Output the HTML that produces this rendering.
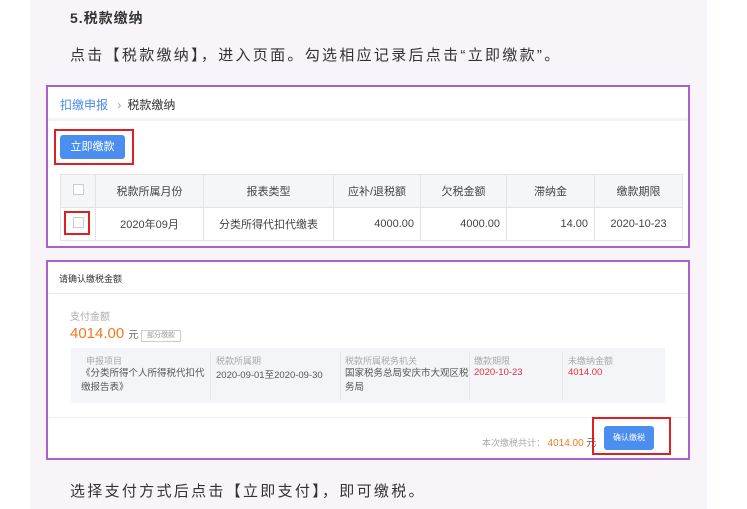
<!DOCTYPE html>
<html><head><meta charset="utf-8"><style>
*{margin:0;padding:0;box-sizing:border-box}
body{width:747px;height:509px;background:#fff;position:relative;overflow:hidden;font-family:"Liberation Sans","Noto Sans CJK SC",sans-serif;}
.bg{position:absolute;left:30px;top:0;width:677px;height:509px;background:#f9f4fa}
.a{position:absolute;white-space:nowrap}
.box{position:absolute;border:2px solid #a663cc;background:#fff}
.g{color:#aaa}
td{border:1px solid #e3e3e3;font-size:11px;color:#444;text-align:center;height:33px}
</style></head><body>
<div class="bg"></div>
<div class="a" style="left:70px;top:8px;font-size:14px;font-weight:bold;color:#333;letter-spacing:1px">5.税款缴纳</div>
<div class="a" style="left:70px;top:44px;font-size:15px;color:#333;letter-spacing:2.3px">点击【税款缴纳】，进入页面。勾选相应记录后点击“立即缴款”。</div>

<div class="box" style="left:46px;top:85px;width:644px;height:163px">
 <div class="a" style="left:12px;top:9px;font-size:12px;color:#4a8ae8">扣缴申报 <span style="color:#999;margin:0 6px">›</span><span style="color:#333">税款缴纳</span></div>
 <div class="a" style="left:0;top:31px;width:640px;height:3px;background:#f2f3f5"></div>
 <div class="a" style="left:6px;top:42px;width:80px;height:36px;border:2px solid #e02020"></div>
 <div class="a" style="left:12px;top:48px;width:65px;height:24px;background:#4a8ef0;border-radius:3px;color:#fff;font-size:11px;text-align:center;line-height:24px">立即缴款</div>
 <table style="position:absolute;left:12px;top:87px;width:623px;border-collapse:collapse">
  <tr style="background:#f5f6f8"><td style="width:35px"><span style="display:inline-block;width:11px;height:11px;border:1px solid #ccc;background:#fff"></span></td><td style="width:108px">税款所属月份</td><td style="width:130px">报表类型</td><td style="width:87px">应补/退税额</td><td style="width:86px">欠税金额</td><td style="width:88px">滞纳金</td><td>缴款期限</td></tr>
  <tr><td><span style="display:inline-block;width:11px;height:11px;border:1px solid #ccc"></span></td><td>2020年09月</td><td>分类所得代扣代缴表</td><td style="text-align:right;padding-right:6px">4000.00</td><td style="text-align:right;padding-right:6px">4000.00</td><td style="text-align:right;padding-right:6px">14.00</td><td>2020-10-23</td></tr>
 </table>
 <div class="a" style="left:16px;top:124px;width:26px;height:24px;border:2px solid #e02020"></div>
</div>

<div class="box" style="left:46px;top:260px;width:644px;height:200px">
 <div class="a" style="left:11px;top:10px;font-size:9px;color:#333">请确认缴税金额</div>
 <div class="a" style="left:0;top:31px;width:640px;height:1px;background:#e8e8e8"></div>
 <div class="a g" style="left:22px;top:46px;font-size:10px">支付金额</div>
 <div class="a" style="left:22px;top:63px;font-size:15px;color:#f07a22">4014.00 <span style="font-size:10px;color:#666">元</span></div>
 <div class="a" style="left:93px;top:68px;width:40px;height:12px;border:1px solid #ccc;font-size:7px;color:#999;text-align:center;line-height:10px">部分缴款</div>
 <div class="a" style="left:23px;top:86px;width:594px;height:55px;background:#f3f5f8"></div>
 <div class="a g" style="left:38px;top:92px;font-size:9px">申报项目</div>
 <div class="a" style="left:33px;top:105px;font-size:9.5px;color:#555;line-height:14px">《分类所得个人所得税代扣代<br>缴报告表》</div>
 <div class="a" style="left:162px;top:90px;width:1px;height:48px;background:#e4e6ea"></div>
 <div class="a g" style="left:168px;top:92px;font-size:9px">税款所属期</div>
 <div class="a" style="left:168px;top:105px;font-size:9.5px;color:#555">2020-09-01至2020-09-30</div>
 <div class="a" style="left:292px;top:90px;width:1px;height:48px;background:#e4e6ea"></div>
 <div class="a g" style="left:297px;top:92px;font-size:9px">税款所属税务机关</div>
 <div class="a" style="left:297px;top:105px;font-size:9.5px;color:#555;line-height:14px">国家税务总局安庆市大观区税<br>务局</div>
 <div class="a" style="left:421px;top:90px;width:1px;height:48px;background:#e4e6ea"></div>
 <div class="a g" style="left:426px;top:92px;font-size:9px">缴款期限</div>
 <div class="a" style="left:426px;top:105px;font-size:9.5px;color:#e0303a">2020-10-23</div>
 <div class="a" style="left:514px;top:90px;width:1px;height:48px;background:#e4e6ea"></div>
 <div class="a g" style="left:520px;top:92px;font-size:9px">未缴纳金额</div>
 <div class="a" style="left:520px;top:105px;font-size:9.5px;color:#e0303a">4014.00</div>
 <div class="a" style="left:0;top:155px;width:640px;height:1px;background:#eee"></div>
 <div class="a g" style="left:434px;top:172px;font-size:9px">本次缴税共计： <span style="color:#f07a22;font-size:10px">4014.00</span> <span style="color:#666;font-size:10px">元</span></div>
 <div class="a" style="left:544px;top:155px;width:79px;height:38px;border:2px solid #e02020"></div>
 <div class="a" style="left:556px;top:164px;width:50px;height:24px;background:#4a8ef0;border-radius:3px;color:#fff;font-size:8px;text-align:center;line-height:24px">确认缴税</div>
</div>

<div class="a" style="left:70px;top:480px;font-size:15px;color:#333;letter-spacing:2.3px">选择支付方式后点击【立即支付】，即可缴税。</div>
</body></html>
